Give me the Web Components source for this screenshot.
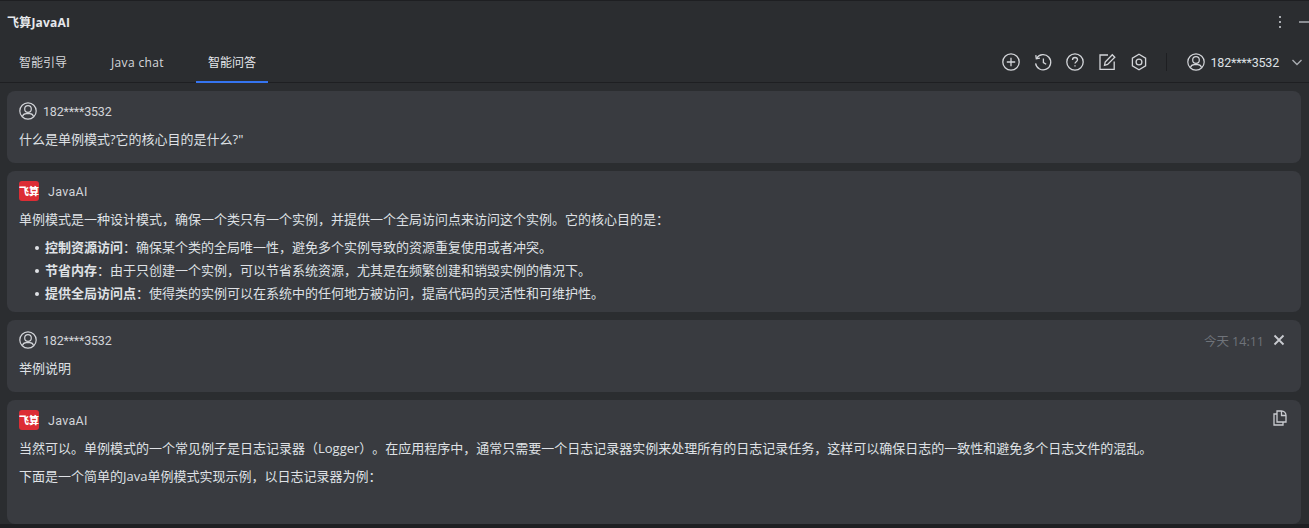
<!DOCTYPE html>
<html lang="zh">
<head>
<meta charset="utf-8">
<style>
    html, body { margin: 0; height: 100%; background: #2b2d30; overflow: hidden; }
    body {
        color: #dfe1e5;
        font-family: "Open Sans", "Noto Sans CJK SC", sans-serif;
        font-size: 13px;
        text-spacing-trim: space-all;
    }
    p { margin: 0; line-height: 20px; }
    p + p { margin-top: 8px; }
</style>
</head>
<body>

<app-shell>
    <title-bar slot="head">飞算JavaAI</title-bar>
    <tab-bar slot="head">
        <tab-item>智能引导</tab-item>
        <tab-item><span style="letter-spacing:.35px">Java chat</span></tab-item>
        <tab-item active>智能问答</tab-item>
        <span slot="user">182****3532</span>
    </tab-bar>

    <chat-card who="182****3532" style="--h:72px">
        <p>什么是单例模式?它的核心目的是什么?"</p>
    </chat-card>

    <chat-card ai style="--h:141px">
        <p>单例模式是一种设计模式，确保一个类只有一个实例，并提供一个全局访问点来访问这个实例。它的核心目的是：</p>
        <bullet-list>
            <bullet-row><b>控制资源访问</b>：确保某个类的全局唯一性，避免多个实例导致的资源重复使用或者冲突。</bullet-row>
            <bullet-row><b>节省内存</b>：由于只创建一个实例，可以节省系统资源，尤其是在频繁创建和销毁实例的情况下。</bullet-row>
            <bullet-row><b>提供全局访问点</b>：使得类的实例可以在系统中的任何地方被访问，提高代码的灵活性和可维护性。</bullet-row>
        </bullet-list>
    </chat-card>

    <chat-card who="182****3532" style="--h:72px">
        <span slot="corner" style="font-size:12.5px">今天 14:11</span>
        <svg slot="corner" width="12" height="12" viewBox="0 0 12 12" fill="none" stroke="#c9cbd0" stroke-width="1.8"><path d="M1.5 1.5l9 9M10.5 1.5l-9 9"/></svg>
        <p>举例说明</p>
    </chat-card>

    <chat-card ai style="--h:124px">
        <svg slot="corner" style="margin:-4px -2px 0 0" width="14" height="16" viewBox="0 0 14 16" fill="none" stroke="#c9cbd0" stroke-width="1.3"><path d="M4 1h4.500C11 1 13 3 13 5.500V12H4z"/><path d="M8.500 1v4.500H13"/><path d="M4 4H1v11h9v-3"/></svg>
        <p>当然可以。单例模式的一个常见例子是日志记录器（Logger）。在应用程序中，通常只需要一个日志记录器实例来处理所有的日志记录任务，这样可以确保日志的一致性和避免多个日志文件的混乱。</p>
        <p>下面是一个简单的Java单例模式实现示例，以日志记录器为例：</p>
    </chat-card>
</app-shell>

<script>
// head and shoulders in a ring, used in the tab bar and on the cards
const userIcon = `
    <circle cx="9" cy="9" r="8.2"></circle>
    <circle cx="9" cy="7" r="3.3"></circle>
    <path d="M3.4 14.6c.6-2.2 2.2-3 3.8-3h3.6c1.6 0 3.2.8 3.8 3"></path>
`;

class AppShell extends HTMLElement {
    constructor() {
        super();
        this.attachShadow({ mode: 'open' }).innerHTML = `
            <style>
                :host { display: flex; flex-direction: column; height: 528px; border-top: 1px solid #1e1f22; box-sizing: border-box; }
                .list { flex: 1; min-height: 0; display: flex; flex-direction: column; gap: 8px; padding: 8px 8px 0 7px; }
                .foot { height: 4px; background: #1e1f22; flex: none; }
            </style>
            <slot name="head"></slot>
            <div class="list"><slot></slot></div>
            <div class="foot"></div>
        `;
    }
}

class TitleBar extends HTMLElement {
    constructor() {
        super();
        this.attachShadow({ mode: 'open' }).innerHTML = `
            <style>
                :host { display: flex; align-items: center; justify-content: space-between; height: 41px; padding-left: 7px; }
                b { font-size: 12px; font-weight: 700; color: #e6e8ec; letter-spacing: .2px; }
                .tools { display: flex; align-items: center; gap: 18px; }
                .dots { display: flex; flex-direction: column; gap: 3px; }
                .dots i { width: 2px; height: 2px; background: #a8abb0; display: block; }
                .min { width: 10px; height: 2px; background: #8b8e93; }
            </style>
            <b><slot></slot></b>
            <div class="tools">
                <div class="dots"><i></i><i></i><i></i></div>
                <div class="min"></div>
            </div>
        `;
    }
}

class TabBar extends HTMLElement {
    constructor() {
        super();
        this.attachShadow({ mode: 'open' }).innerHTML = `
            <style>
                :host { display: flex; align-items: stretch; justify-content: space-between; height: 41px; box-sizing: border-box; border-bottom: 1px solid #1e1f22; }
                .tabs { display: flex; gap: 20px; padding-left: 7px; }
                .right { display: flex; align-items: center; color: #d3d5d9; padding-right: 7px; }
                svg { display: block; flex: none; }
                .btns { display: flex; align-items: center; gap: 12px; }
                .sep { width: 1px; height: 18px; background: #1e1f22; margin: 0 20px 0 17px; }
                .who { display: flex; align-items: center; gap: 5px; }
                .who span { font-family: Roboto, "Noto Sans CJK SC", sans-serif; font-size: 12.5px; letter-spacing: -.2px; color: #dfe1e5; }
                .chev { margin-left: 13px; }
            </style>
            <div class="tabs"><slot></slot></div>
            <div class="right">
                <div class="btns">
                    <svg width="20" height="20" viewBox="0 0 20 20" fill="none" stroke="currentColor" stroke-width="1.3">
                        <circle cx="10" cy="10" r="8.2"/><path d="M10 5.8v8.4M5.8 10h8.4"/>
                    </svg>
                    <svg width="20" height="20" viewBox="0 0 20 20" fill="none" stroke="currentColor" stroke-width="1.3">
                        <path d="M3.700 6.200A7.600 7.600 0 1 1 2.600 11.400"/><path d="M2.800 3.200 3.300 6.800 6.900 6.200"/><path d="M10.400 6.400v4.200l2.800 1.700"/>
                    </svg>
                    <svg width="20" height="20" viewBox="0 0 20 20" fill="none" stroke="currentColor" stroke-width="1.3">
                        <circle cx="10" cy="10" r="8.2"/><path d="M7.500 8c0-1.500 1.100-2.500 2.500-2.500s2.500 1 2.500 2.300c0 1.900-2.500 2-2.500 3.800"/><path d="M10 13.200v1.400"/>
                    </svg>
                    <svg width="20" height="20" viewBox="0 0 20 20" fill="none" stroke="currentColor" stroke-width="1.3">
                        <path d="M11 3H3v14.300h14.200V9.500"/><path d="M7.500 13.300l.7-3.300L15.300 2.700l2.500 2.500-7.200 7.300z"/>
                    </svg>
                    <svg width="20" height="20" viewBox="0 0 20 20" fill="none" stroke="currentColor" stroke-width="1.3">
                        <path d="M10 2.300l6.600 3.800v7.800L10 17.700l-6.600-3.800V6.100z"/><circle cx="10" cy="10" r="2.900"/>
                    </svg>
                </div>
                <div class="sep"></div>
                <div class="who">
                    <svg width="18" height="18" viewBox="0 0 18 18" fill="none" stroke="currentColor" stroke-width="1.2">${userIcon}</svg>
                    <span><slot name="user"></slot></span>
                </div>
                <svg class="chev" width="10" height="7" viewBox="0 0 10 7" fill="none" stroke="#a8abb0" stroke-width="1.4"><path d="M.5 1l4.500 4.500L9.500 1"/></svg>
            </div>
        `;
    }
}

class TabItem extends HTMLElement {
    constructor() {
        super();
        this.attachShadow({ mode: 'open' }).innerHTML = `
            <style>
                :host { display: flex; align-items: center; padding: 0 12px; position: relative; color: #d6d8dc; font-size: 12px; }
                :host([active]) { color: #e6e8ec; }
                :host([active])::after { content: ''; position: absolute; left: 0; right: 0; bottom: -1px; height: 2px; background: #3574f0; }
            </style>
            <slot></slot>
        `;
    }
}

// one message card: sender line + body, top right corner is optional
class ChatCard extends HTMLElement {
    constructor() {
        super();
        const ai = this.hasAttribute('ai');
        const who = ai
            ? `<div class="logo">飞算</div><span class="name ai">JavaAI</span>`
            : `<svg width="18" height="18" viewBox="0 0 18 18" fill="none" stroke="#d3d5d9" stroke-width="1.2">${userIcon}</svg><span class="name">${this.getAttribute('who')}</span>`;
        this.attachShadow({ mode: 'open' }).innerHTML = `
            <style>
                :host { display: block; flex: none; box-sizing: border-box; background: #393b40; border-radius: 8px; padding: 10px 12px 0; height: var(--h); }
                .head { display: flex; align-items: center; height: 20px; margin-bottom: 8px; justify-content: space-between; }
                .who { display: flex; align-items: center; }
                svg { display: block; flex: none; }
                .name { margin-left: 6px; font-family: Roboto, "Noto Sans CJK SC", sans-serif; font-size: 12.5px; letter-spacing: -.2px; color: #d3d5d9; }
                .name.ai { margin-left: 9px; letter-spacing: .3px; }
                .logo { width: 20px; height: 20px; border-radius: 3px; background: #dc2d35; color: #fff; font-size: 10px; font-weight: 900; line-height: 20px; text-align: center; white-space: nowrap; overflow: hidden; }
                .corner { display: flex; align-items: center; gap: 9px; color: #6f737a; margin-right: 4px; }
            </style>
            <div class="head">
                <div class="who">${who}</div>
                <div class="corner"><slot name="corner"></slot></div>
            </div>
            <slot></slot>
        `;
    }
}

class BulletList extends HTMLElement {
    constructor() {
        super();
        this.attachShadow({ mode: 'open' }).innerHTML = `
            <style>
                :host { display: flex; flex-direction: column; gap: 5px; padding-left: 16px; margin-top: 9px; }
            </style>
            <slot></slot>
        `;
    }
}

class BulletRow extends HTMLElement {
    constructor() {
        super();
        this.attachShadow({ mode: 'open' }).innerHTML = `
            <style>
                :host { display: block; position: relative; padding-left: 10px; line-height: 18px; color: #dfe1e5; white-space: nowrap; }
                :host::before { content: ''; position: absolute; left: 0; top: 8px; width: 4px; height: 4px; border-radius: 50%; background: #dfe1e5; }
            </style>
            <slot></slot>
        `;
    }
}

customElements.define('app-shell', AppShell);
customElements.define('title-bar', TitleBar);
customElements.define('tab-bar', TabBar);
customElements.define('tab-item', TabItem);
customElements.define('chat-card', ChatCard);
customElements.define('bullet-list', BulletList);
customElements.define('bullet-row', BulletRow);
</script>

</body>
</html>
